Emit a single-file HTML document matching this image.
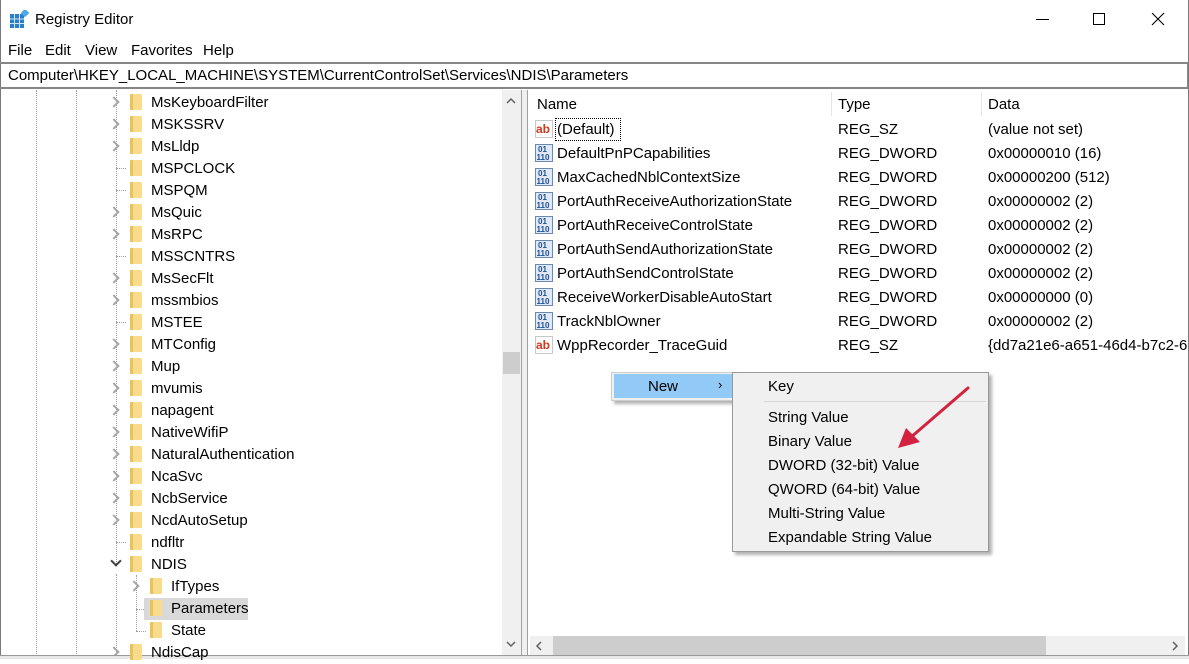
<!DOCTYPE html>
<html><head><style>
*{margin:0;padding:0;box-sizing:border-box}
body{width:1189px;height:659px;overflow:hidden;background:#fff;font-family:"Segoe UI","Liberation Sans",sans-serif;font-size:15px;color:#000;position:relative}
.a{position:absolute;white-space:nowrap}
.tr{position:absolute;height:22px;line-height:22px}
.fold{position:absolute;width:12px;height:16px;background:linear-gradient(90deg,#e8c25a 0 3px,#f8dc8c 3px);border-radius:1px;z-index:3}
.chev{position:absolute;width:8px;height:8px;border-right:2px solid #a6a6a6;border-top:2px solid #a6a6a6;transform:rotate(45deg)}
.dv{position:absolute;border-left:1px dotted #a0a0a0}
.dh{position:absolute;border-top:1px dotted #a0a0a0}
.ic{position:absolute;width:18px;height:18px}
.row{position:absolute;height:24px;line-height:24px}
</style></head><body>
<div class="a" style="left:0;top:0;width:1189px;height:659px;border:1px solid #7a7a7a;border-top:none"></div>
<svg class="a" style="left:10px;top:10px" width="19" height="19"><rect x="0" y="4" width="14" height="14" fill="#2a7fc8"/><g stroke="#cfe6fa" stroke-width="1"><line x1="0" y1="9" x2="14" y2="9"/><line x1="0" y1="13.5" x2="14" y2="13.5"/><line x1="4.5" y1="4" x2="4.5" y2="18"/><line x1="9.5" y1="4" x2="9.5" y2="18"/></g><rect x="12" y="0" width="6" height="6" fill="#4aa8e8" transform="rotate(45 15 3)"/></svg>
<div class="a" style="left:35px;top:11px;font-size:15px">Registry Editor</div>
<div class="a" style="left:1036px;top:19px;width:13px;height:1px;background:#000"></div>
<div class="a" style="left:1093px;top:13px;width:12px;height:12px;border:1px solid #000"></div>
<svg class="a" style="left:1151px;top:12px" width="14" height="14"><path d="M1 1L13 13M13 1L1 13" stroke="#000" stroke-width="1.1"/></svg>
<div class="a" style="left:8px;top:42px">File</div>
<div class="a" style="left:45px;top:42px">Edit</div>
<div class="a" style="left:85px;top:42px">View</div>
<div class="a" style="left:131px;top:42px">Favorites</div>
<div class="a" style="left:203px;top:42px">Help</div>
<div class="a" style="left:0;top:62px;width:1188px;height:27px;border-top:2px solid #868686;border-bottom:2px solid #868686;border-right:1px solid #868686"></div>
<div class="a" style="left:8px;top:67px">Computer\HKEY_LOCAL_MACHINE\SYSTEM\CurrentControlSet\Services\NDIS\Parameters</div>
<div class="dv" style="left:36px;top:90px;height:566px"></div>
<div class="dv" style="left:76px;top:90px;height:566px"></div>
<div class="dv" style="left:116px;top:90px;height:476px"></div>
<div class="dv" style="left:116px;top:574px;height:80px"></div>
<div class="dv" style="left:136px;top:575px;height:56px"></div>
<div class="dh" style="left:136px;top:609px;width:10px"></div>
<div class="dh" style="left:136px;top:631px;width:10px"></div>
<div class="a" style="left:144px;top:598px;width:104px;height:22px;background:#d9d9d9"></div>
<div id="tree"></div>
<div class="a" style="left:502px;top:90px;width:19px;height:566px;background:#f0f0f0"></div>
<div class="a" style="left:503px;top:352px;width:17px;height:22px;background:#cdcdcd"></div>
<svg class="a" style="left:505px;top:97px" width="12" height="8"><path d="M2 6L6 2L10 6" fill="none" stroke="#606060" stroke-width="1.5"/></svg>
<svg class="a" style="left:505px;top:640px" width="12" height="8"><path d="M2 2L6 6L10 2" fill="none" stroke="#606060" stroke-width="1.5"/></svg>
<div class="a" style="left:521px;top:90px;width:7px;height:566px;background:#f0f0f0;border-left:1px solid #a0a0a0;border-right:1px solid #a0a0a0"></div>
<div class="a" style="left:537px;top:96px">Name</div>
<div class="a" style="left:838px;top:96px">Type</div>
<div class="a" style="left:988px;top:96px">Data</div>
<div class="a" style="left:831px;top:92px;width:1px;height:24px;background:#e5e5e5"></div>
<div class="a" style="left:981px;top:92px;width:1px;height:24px;background:#e5e5e5"></div>
<div id="vals"></div>
<div class="a" style="left:555px;top:118px;width:66px;height:23px;border:1px dotted #000"></div>
<div class="a" style="left:530px;top:636px;width:655px;height:19px;background:#f0f0f0"></div>
<div class="a" style="left:553px;top:636px;width:493px;height:19px;background:#cdcdcd"></div>
<svg class="a" style="left:535px;top:640px" width="8" height="12"><path d="M6 2L2 6L6 10" fill="none" stroke="#606060" stroke-width="1.5"/></svg>
<svg class="a" style="left:1171px;top:640px" width="8" height="12"><path d="M2 2L6 6L2 10" fill="none" stroke="#606060" stroke-width="1.5"/></svg>
<div class="a" style="left:0;top:655px;width:1189px;height:4px;background:#e8e8e8;border-top:1px solid #999"></div>
<div class="a" style="left:611px;top:372px;width:124px;height:29px;background:#f0f0f0;border:1px solid #ccc;box-shadow:3px 3px 3px rgba(0,0,0,.3)"></div>
<div class="a" style="left:614px;top:374px;width:119px;height:24px;background:#91c9f7"></div>
<div class="a" style="left:648px;top:378px">New</div>
<div class="a" style="left:718px;top:377px;font-size:13px">›</div>
<div class="a" style="left:732px;top:372px;width:257px;height:180px;background:#f0f0f0;border:1px solid #999;box-shadow:3px 3px 3px rgba(0,0,0,.3)"></div>
<div class="a" style="left:764px;top:401px;width:222px;height:1px;background:#d7d7d7"></div>
<div class="a" style="left:768px;top:378px">Key</div>
<div class="a" style="left:768px;top:409px">String Value</div>
<div class="a" style="left:768px;top:433px">Binary Value</div>
<div class="a" style="left:768px;top:457px">DWORD (32-bit) Value</div>
<div class="a" style="left:768px;top:481px">QWORD (64-bit) Value</div>
<div class="a" style="left:768px;top:505px">Multi-String Value</div>
<div class="a" style="left:768px;top:529px">Expandable String Value</div>
<svg class="a" style="left:890px;top:380px" width="85" height="75"><path d="M78 8L20 58" stroke="#d3223f" stroke-width="3" stroke-linecap="round"/><path d="M8 68L16 48L30 62Z" fill="#d3223f"/></svg>
<script>
var t=[["MsKeyboardFilter",1],["MSKSSRV",1],["MsLldp",1],["MSPCLOCK",0],["MSPQM",0],["MsQuic",1],["MsRPC",1],["MSSCNTRS",0],["MsSecFlt",1],["mssmbios",1],["MSTEE",0],["MTConfig",1],["Mup",1],["mvumis",1],["napagent",1],["NativeWifiP",1],["NaturalAuthentication",1],["NcaSvc",1],["NcbService",1],["NcdAutoSetup",1],["ndfltr",0],["NDIS",2],["IfTypes",3],["Parameters",4],["State",4],["NdisCap",1]];
var h="";t.forEach(function(r,i){var y=91+i*22,c=r[1]>=3,x=c?150:130;
if(r[1]==1)h+='<div class="chev" style="left:110px;top:'+(y+7)+'px"></div>';
if(r[1]==2)h+='<div class="chev" style="left:112px;top:'+(y+4)+'px;transform:rotate(135deg);border-color:#404040"></div>';
if(r[1]==3)h+='<div class="chev" style="left:130px;top:'+(y+7)+'px"></div>';
if(r[1]==0)h+='<div class="dh" style="left:116px;top:'+(y+11)+'px;width:10px"></div>';
h+='<div class="fold" style="left:'+x+'px;top:'+(y+3)+'px"></div><div class="tr" style="left:'+(x+21)+'px;top:'+(y+1)+'px;z-index:2">'+r[0]+'</div>';});
document.getElementById("tree").innerHTML=h;
var v=[["(Default)","REG_SZ","(value not set)",0],["DefaultPnPCapabilities","REG_DWORD","0x00000010 (16)",1],["MaxCachedNblContextSize","REG_DWORD","0x00000200 (512)",1],["PortAuthReceiveAuthorizationState","REG_DWORD","0x00000002 (2)",1],["PortAuthReceiveControlState","REG_DWORD","0x00000002 (2)",1],["PortAuthSendAuthorizationState","REG_DWORD","0x00000002 (2)",1],["PortAuthSendControlState","REG_DWORD","0x00000002 (2)",1],["ReceiveWorkerDisableAutoStart","REG_DWORD","0x00000000 (0)",1],["TrackNblOwner","REG_DWORD","0x00000002 (2)",1],["WppRecorder_TraceGuid","REG_SZ","{dd7a21e6-a651-46d4-b7c2-6",0]];
h="";v.forEach(function(r,i){var y=117+i*24;
if(r[3])h+='<svg class="ic" style="left:535px;top:'+(y+3)+'px" width="18" height="18"><rect x="0.5" y="0.5" width="17" height="17" fill="#dfe8f5" stroke="#6b88b5"/><text x="3" y="8" font-size="8" font-family="Liberation Sans" fill="#1d4f9a" font-weight="bold">01</text><text x="1.5" y="16" font-size="8" font-family="Liberation Sans" fill="#1d4f9a" font-weight="bold">110</text></svg>';
else h+='<svg class="ic" style="left:535px;top:'+(y+3)+'px" width="18" height="18"><rect x="0.5" y="0.5" width="17" height="17" fill="#fff" stroke="#c8c8c8"/><text x="1" y="13" font-size="12" font-family="Liberation Sans" fill="#d0391c" font-weight="bold">ab</text></svg>';
h+='<div class="row" style="left:557px;top:'+(y+1)+'px">'+r[0]+'</div><div class="row" style="left:838px;top:'+(y+1)+'px">'+r[1]+'</div><div class="row" style="left:988px;top:'+(y+1)+'px">'+r[2]+'</div>';});
document.getElementById("vals").innerHTML=h;
</script>
</body></html>
